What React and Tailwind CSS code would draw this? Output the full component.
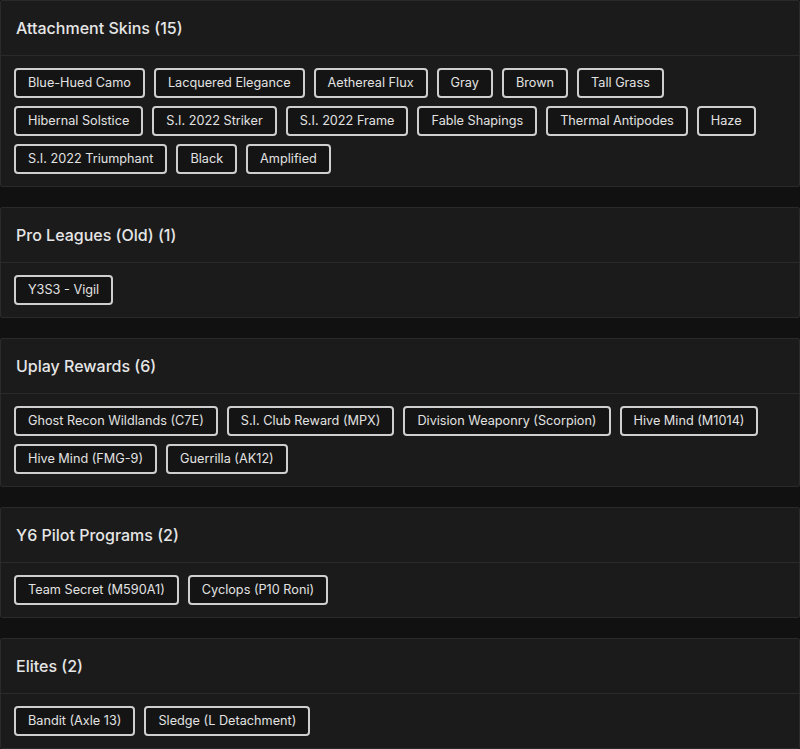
import React from "react";

const sections = [
  {
    title: "Attachment Skins (15)",
    items: [
      "Blue-Hued Camo",
      "Lacquered Elegance",
      "Aethereal Flux",
      "Gray",
      "Brown",
      "Tall Grass",
      "Hibernal Solstice",
      "S.I. 2022 Striker",
      "S.I. 2022 Frame",
      "Fable Shapings",
      "Thermal Antipodes",
      "Haze",
      "S.I. 2022 Triumphant",
      "Black",
      "Amplified",
    ],
  },
  { title: "Pro Leagues (Old) (1)", items: ["Y3S3 - Vigil"] },
  {
    title: "Uplay Rewards (6)",
    items: [
      "Ghost Recon Wildlands (C7E)",
      "S.I. Club Reward (MPX)",
      "Division Weaponry (Scorpion)",
      "Hive Mind (M1014)",
      "Hive Mind (FMG-9)",
      "Guerrilla (AK12)",
    ],
  },
  { title: "Y6 Pilot Programs (2)", items: ["Team Secret (M590A1)", "Cyclops (P10 Roni)"] },
  { title: "Elites (2)", items: ["Bandit (Axle 13)", "Sledge (L Detachment)"] },
];

function Section({ title, items }) {
  return (
    <div className="rounded-[2px] border border-[#2a2a2a] bg-[#1b1b1b]">
      <div className="flex h-[55px] items-center border-b border-[#2a2a2a] px-[15px]">
        <h2 className="text-[16px] font-medium text-[#e6e6e6]">{title}</h2>
      </div>
      <div className="flex flex-wrap gap-x-[9px] gap-y-2 px-[13px] py-[12px]">
        {items.map((item) => (
          <span
            key={item}
            className="flex h-[30px] items-center rounded-[4px] border-2 border-[#cfcfcf] bg-[#141414] px-[12px] text-[12.7px] text-[#e2e2e2]"
          >
            {item}
          </span>
        ))}
      </div>
    </div>
  );
}

export default function App() {
  return (
    <div
      className="flex min-h-screen flex-col gap-5 bg-[#111111]"
      style={{ fontFamily: "Inter, 'Noto Sans', sans-serif" }}
    >
      {sections.map((s) => (
        <Section key={s.title} {...s} />
      ))}
    </div>
  );
}
